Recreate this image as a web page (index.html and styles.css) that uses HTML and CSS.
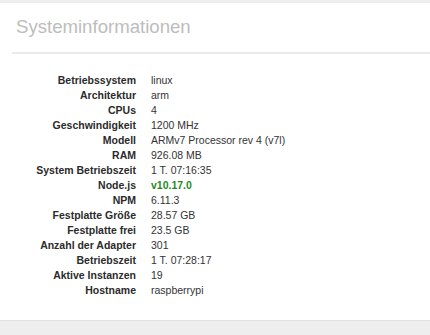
FILE: index.html
```html
<!DOCTYPE html>
<html lang="de">
<head>
    <meta charset="UTF-8">
    <meta name="viewport" content="width=device-width, initial-scale=1.0">
    <title>Systeminformationen</title>
    <link rel="stylesheet" href="styles.css">
</head>
<body>
    <div class="panel">
        <h1 class="panel-title">Systeminformationen</h1>

        <dl class="info-list">
            <dt>Betriebssystem</dt><dd>linux</dd>
            <dt>Architektur</dt><dd>arm</dd>
            <dt>CPUs</dt><dd>4</dd>
            <dt>Geschwindigkeit</dt><dd>1200 MHz</dd>
            <dt>Modell</dt><dd>ARMv7 Processor rev 4 (v7l)</dd>
            <dt>RAM</dt><dd>926.08 MB</dd>
            <dt>System Betriebszeit</dt><dd>1 T. 07:16:35</dd>
            <dt>Node.js</dt><dd class="ok">v10.17.0</dd>
            <dt>NPM</dt><dd>6.11.3</dd>
            <dt>Festplatte Größe</dt><dd>28.57 GB</dd>
            <dt>Festplatte frei</dt><dd>23.5 GB</dd>
            <dt>Anzahl der Adapter</dt><dd>301</dd>
            <dt>Betriebszeit</dt><dd>1 T. 07:28:17</dd>
            <dt>Aktive Instanzen</dt><dd>19</dd>
            <dt>Hostname</dt><dd>raspberrypi</dd>
        </dl>
    </div>
</body>
</html>
```

FILE: styles.css
```css
body {
    margin: 0;
    padding-top: 3px;
    background-color: #eeeeee;
    font-family: "Liberation Sans", Arial, sans-serif;
    color: #333;
    overflow: hidden;
}

.panel {
    background: #fff;
    height: 318px;
    box-sizing: border-box;
    padding-top: 12.6px;
    border-bottom: 1px solid #e2e2e2;
}

.panel-title {
    margin: 0 0 0 12px;
    padding: 0 0 14.4px 4px;
    font-size: 18.6px;
    font-weight: normal;
    line-height: 22px;
    color: #bdbdbd;
    border-bottom: 2px solid #e7eaef;
}

.info-list {
    display: grid;
    grid-template-columns: 106px 1fr;
    column-gap: 15px;
    margin: 19px 0 0 30px;
    font-size: 10.5px;
    line-height: 15px;
}

.info-list dt {
    font-weight: bold;
    text-align: right;
    color: #2b2b2b;
}

.info-list dd {
    margin: 0;
}

.info-list dd.ok {
    font-weight: bold;
    color: #1f8a1f;
}
```
